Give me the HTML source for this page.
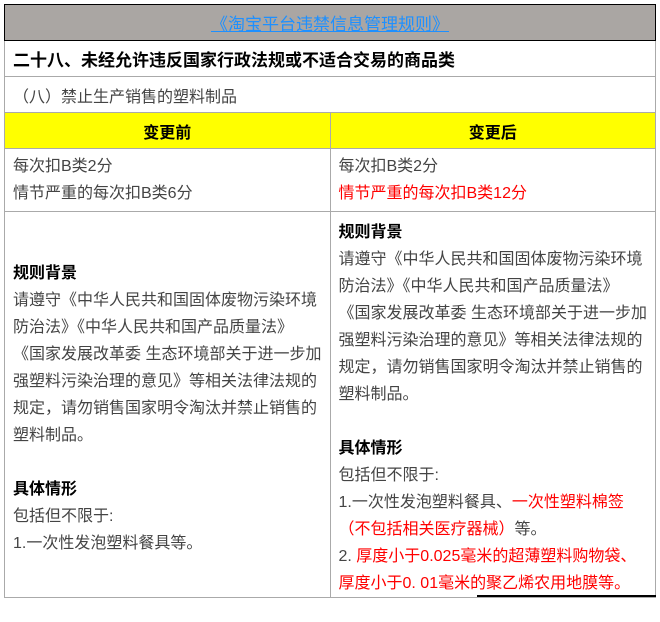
<!DOCTYPE html>
<html><head><meta charset="utf-8"><style>
body{margin:0;background:#fff;font-family:"Liberation Sans","Noto Sans CJK SC",sans-serif;}
.w{position:absolute;left:4px;top:4px;width:652px;}
table{border-collapse:collapse;width:652px;table-layout:fixed;}
td{border:1px solid #aaa;padding:0 8px;font-size:16px;color:#444;white-space:nowrap;overflow:hidden;}
.h{background:#aaa6a3;border:1px solid #000;text-align:center;height:35px;}
.h a{color:#1e90ff;text-decoration:underline;font-size:17px;}
.t{height:35px;font-size:17px;color:#000;font-weight:bold;}
.s{height:35px;}
.y td{background:#ff0;color:#000;font-weight:bold;text-align:center;height:35px;}
.r{color:#f00;}
p{margin:0;line-height:27px;}
b{color:#000;}
.bl{position:absolute;left:477px;top:595px;width:179px;height:2px;background:#000;}
</style></head><body><div class="w"><table>
<tr><td colspan="2" class="h"><a>《淘宝平台违禁信息管理规则》</a></td></tr>
<tr><td colspan="2" class="t">二十八、未经允许违反国家行政法规或不适合交易的商品类</td></tr>
<tr><td colspan="2" class="s">（八）禁止生产销售的塑料制品</td></tr>
<tr class="y"><td style="width:308px">变更前</td><td>变更后</td></tr>
<tr><td style="height:62px"><p>每次扣B类2分</p><p>情节严重的每次扣B类6分</p></td><td><p>每次扣B类2分</p><p class="r">情节严重的每次扣B类12分</p></td></tr>
<tr><td style="height:375px;vertical-align:middle;padding-top:8px"><p><b>规则背景</b></p><p>请遵守《中华人民共和国固体废物污染环境<br>防治法》《中华人民共和国产品质量法》<br>《国家发展改革委 生态环境部关于进一步加<br>强塑料污染治理的意见》等相关法律法规的<br>规定，请勿销售国家明令淘汰并禁止销售的<br>塑料制品。</p><p>&nbsp;</p><p><b>具体情形</b></p><p>包括但不限于:</p><p>1.一次性发泡塑料餐具等。</p></td>
<td style="vertical-align:top;padding-top:7px"><p><b>规则背景</b></p><p>请遵守《中华人民共和国固体废物污染环境<br>防治法》《中华人民共和国产品质量法》<br>《国家发展改革委 生态环境部关于进一步加<br>强塑料污染治理的意见》等相关法律法规的<br>规定，请勿销售国家明令淘汰并禁止销售的<br>塑料制品。</p><p>&nbsp;</p><p><b>具体情形</b></p><p>包括但不限于:</p><p>1.一次性发泡塑料餐具、<span class="r">一次性塑料棉签</span><br><span class="r">（不包括相关医疗器械）</span>等。</p><p>2. <span class="r">厚度小于0.025毫米的超薄塑料购物袋、<br>厚度小于0. 01毫米的聚乙烯农用地膜等。</span></p></td></tr>
</table></div><div class="bl"></div></body></html>
